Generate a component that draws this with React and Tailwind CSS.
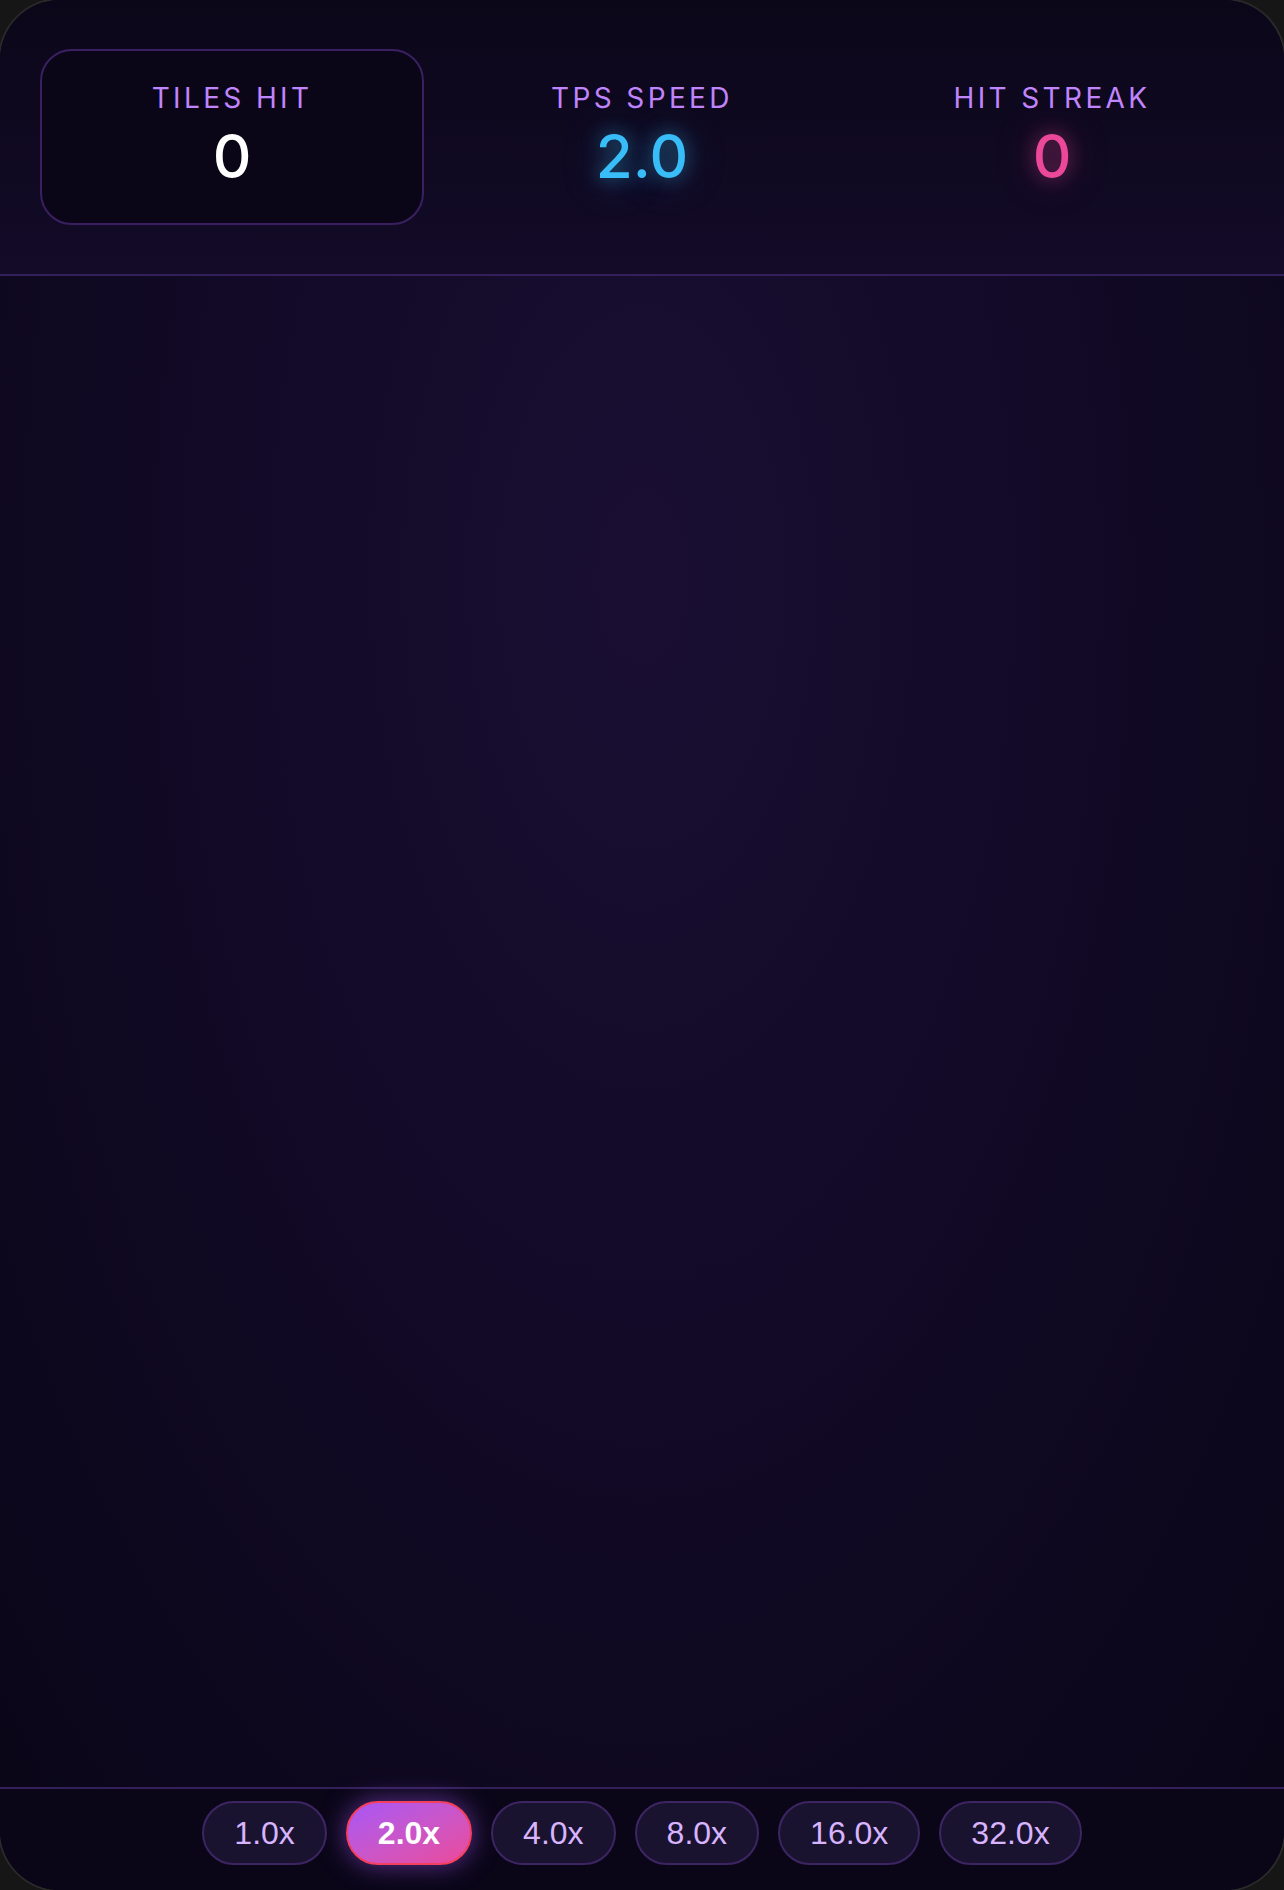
const speeds = ['1.0x', '2.0x', '4.0x', '8.0x', '16.0x', '32.0x'];

function Stat({ label, value, valueClass, boxed }) {
  return (
    <div
      className={
        'h-[176px] pb-[4px] flex flex-col items-center justify-center gap-[14px] ' +
        (boxed ? 'rounded-[32px] border-2 border-[#3a2061] bg-[#0a0617]' : '')
      }
    >
      <div className="text-[28px] leading-none tracking-[0.12em] text-[#c084fc]">{label}</div>
      <div className={'text-[60px] leading-none font-medium ' + valueClass}>{value}</div>
    </div>
  );
}

export default function App() {
  const active = '2.0x';

  return (
    <div className="min-h-[1890px] bg-[#161616] font-['Inter',sans-serif]">
      <div className="h-[1890px] flex flex-col rounded-[60px] overflow-hidden shadow-[0_0_0_2px_#2a2a2a] bg-[#0a0618]">
        {/* stats */}
        <div className="pt-[49px] pb-[49px] px-[40px] border-b-2 border-[#33205a] bg-linear-to-b from-[#0b0719] to-[#130b28]">
          <div className="grid grid-cols-3 gap-[26px]">
            <Stat label="TILES HIT" value="0" valueClass="text-white" boxed />
            <Stat
              label="TPS SPEED"
              value="2.0"
              valueClass="text-[#38bdf8] [text-shadow:0_0_18px_rgba(56,189,248,0.5),0_0_40px_rgba(56,189,248,0.35)]"
            />
            <Stat
              label="HIT STREAK"
              value="0"
              valueClass="text-[#ec4899] [text-shadow:0_0_18px_rgba(236,72,153,0.5),0_0_40px_rgba(236,72,153,0.35)]"
            />
          </div>
        </div>

        {/* board */}
        <div className="flex-1 bg-[radial-gradient(ellipse_at_50%_20%,#1a0f33_0%,#120a27_45%,#0a0618_100%)]" />

        {/* speed selector */}
        <div className="border-t-2 border-[#33205a] bg-[#0a0618] pt-[12px] pb-[25px] flex justify-center gap-[19px] font-['Liberation_Sans',sans-serif]">
          {speeds.map((s) =>
            s === active ? (
              <button
                key={s}
                className="h-[64px] px-[30px] rounded-full border-2 border-[#f43f5e] bg-linear-to-br from-[#a855f7] to-[#ec4899] text-[32px] font-bold text-white shadow-[0_0_26px_rgba(168,85,247,0.55)]"
              >
                {s}
              </button>
            ) : (
              <button
                key={s}
                className="h-[64px] px-[30px] rounded-full border-2 border-[#3d2563] bg-[#1a1330] text-[32px] text-[#d8b4fe]"
              >
                {s}
              </button>
            )
          )}
        </div>
      </div>
    </div>
  );
}
